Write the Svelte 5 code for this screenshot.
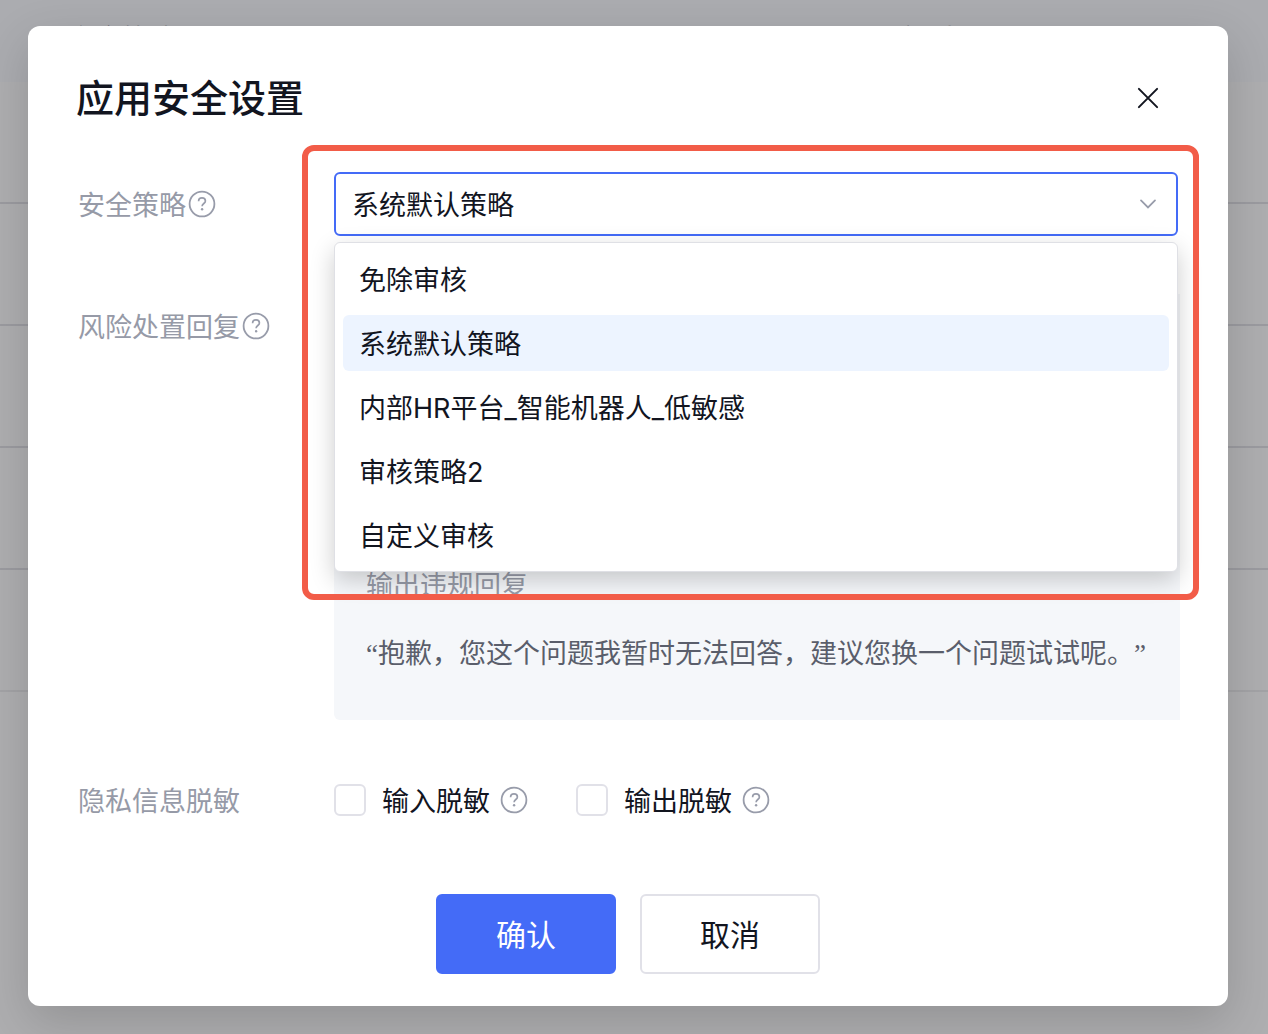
<script lang="ts">
	const options = [
		'免除审核',
		'系统默认策略',
		'内部HR平台_智能机器人_低敏感',
		'审核策略2',
		'自定义审核'
	];

	let policy = $state('系统默认策略');
	let open = $state(true);
	let maskInput = $state(false);
	let maskOutput = $state(false);

	function pick(option: string) {
		policy = option;
		open = false;
	}

	function toggle(e: MouseEvent) {
		e.preventDefault();
		open = !open;
	}
</script>

{#snippet help()}
	<button type="button" class="help" aria-label="帮助">
		<svg width="28" height="28" viewBox="0 0 28 28" fill="none" stroke="currentColor">
			<circle cx="14" cy="14" r="12.4" stroke-width="1.8" />
			<path
				d="M10.6 11.2c0-2 1.4-3.3 3.4-3.3s3.4 1.2 3.4 3c0 2.5-3.3 2.7-3.3 5.3"
				stroke-width="1.7"
			/>
			<circle cx="14.1" cy="19.2" r="1.2" fill="currentColor" stroke="none" />
		</svg>
	</button>
{/snippet}

<div class="page">
	<table class="backdrop" aria-hidden="true">
		<thead>
			<tr><th>安全策略</th><th>更新时间</th></tr>
		</thead>
		<tbody>
			{#each [1, 2, 3, 4, 5] as row (row)}
				<tr><td></td><td></td></tr>
			{/each}
		</tbody>
	</table>

	<div class="overlay">
		<div class="dialog" role="dialog" aria-modal="true" aria-labelledby="title">
			<header>
				<h1 id="title">应用安全设置</h1>
				<button type="button" class="close" aria-label="关闭">
					<svg width="24" height="24" viewBox="0 0 24 24" fill="none" stroke="currentColor">
						<path d="M2.9 2.9l18.2 18.2M21.1 2.9L2.9 21.1" stroke-width="2" stroke-linecap="round" />
					</svg>
				</button>
			</header>

			<div class="row policy">
				<div class="label"><label for="policy">安全策略</label>{@render help()}</div>
				<div class="select">
					<select id="policy" bind:value={policy} onmousedown={toggle}>
						{#each options as option}
							<option>{option}</option>
						{/each}
					</select>
					<svg class="arrow" width="20" height="20" viewBox="0 0 20 20" fill="none" stroke="currentColor">
						<path d="M3 6.4l7 7 7-7" stroke-width="1.8" stroke-linecap="round" />
					</svg>
					{#if open}
						<div class="menu" role="listbox" aria-label="安全策略">
							{#each options as option}
								<button
									type="button"
									role="option"
									aria-selected={option === policy}
									class:active={option === policy}
									onclick={() => pick(option)}>{option}</button
								>
							{/each}
						</div>
					{/if}
					<div class="highlight"></div>
				</div>
			</div>

			<div class="row reply">
				<div class="label"><span>风险处置回复</span>{@render help()}</div>
				<div class="panel">
					<p class="caption">输出违规回复</p>
					<p class="quote">“抱歉，您这个问题我暂时无法回答，建议您换一个问题试试呢。”</p>
				</div>
			</div>

			<div class="row privacy">
				<div class="label"><span>隐私信息脱敏</span></div>
				<div class="checks">
					<div class="check">
						<input type="checkbox" id="mask-input" bind:checked={maskInput} />
						<label for="mask-input">输入脱敏</label>
						{@render help()}
					</div>
					<div class="check">
						<input type="checkbox" id="mask-output" bind:checked={maskOutput} />
						<label for="mask-output">输出脱敏</label>
						{@render help()}
					</div>
				</div>
			</div>

			<footer>
				<button type="button" class="primary">确认</button>
				<button type="button">取消</button>
			</footer>
		</div>
	</div>
</div>

<style>
	:global(body) {
		margin: 0;
		background: #aeaeb0;
	}

	.page,
	.page button,
	.page select {
		font-family: Inter, 'Noto Sans CJK SC', sans-serif;
		font-size: 27px;
		color: #12151f;
	}

	.page {
		position: relative;
		min-height: 100vh;
		overflow: hidden;
	}

	.page button {
		padding: 0;
		border: 0;
		background: none;
		cursor: pointer;
	}

	svg {
		display: block;
	}

	/* table behind the dialog */
	.backdrop {
		position: absolute;
		top: 0;
		left: 0;
		width: 100%;
		table-layout: fixed;
		border-collapse: collapse;
	}

	.backdrop th {
		height: 82px;
		box-sizing: border-box;
		padding: 0 0 8px 68px;
		background: #abacb0;
		color: #55575e;
		font-weight: 400;
		text-align: left;
	}

	.backdrop th:last-child {
		padding-left: 240px;
	}

	.backdrop td {
		height: 120px;
		padding: 0;
		border-bottom: 2px solid #9b9ba0;
	}

	.backdrop tr:last-child td {
		border-color: #a3a3a6;
	}

	.overlay {
		position: relative;
		padding: 26px 40px 28px 28px;
	}

	.dialog {
		padding: 48px 48px 32px;
		border-radius: 12px;
		background: #fff;
		box-shadow: 0 16px 48px rgba(0, 0, 0, 0.16);
	}

	header {
		display: flex;
		justify-content: space-between;
		align-items: center;
		height: 48px;
		padding-right: 20px;
	}

	h1 {
		margin: 0;
		font-size: 38px;
		font-weight: 500;
		line-height: 48px;
	}

	.row {
		display: grid;
		grid-template-columns: 258px 1fr;
	}

	.policy {
		margin-top: 50px;
	}

	.reply {
		margin-top: 58px;
	}

	.privacy {
		margin-top: 48px;
	}

	.label {
		display: flex;
		align-items: center;
		gap: 2px;
		height: 64px;
		padding-left: 2px;
		color: #969aa7;
	}

	.label label,
	.label span,
	.check label {
		padding-bottom: 2px;
	}

	.page .help {
		color: #989caa;
	}

	.select {
		position: relative;
		margin-right: 2px;
	}

	.page select {
		appearance: none;
		display: block;
		width: 100%;
		height: 64px;
		padding: 2px 48px 0 16px;
		border: 2px solid #446bf7;
		border-radius: 6px;
		outline: none;
		background: #fff;
	}

	.arrow {
		position: absolute;
		top: 22px;
		right: 20px;
		color: #989caa;
		pointer-events: none;
	}

	.menu {
		position: absolute;
		z-index: 2;
		top: 70px;
		left: 0;
		right: 0;
		display: flex;
		flex-direction: column;
		gap: 8px;
		padding: 8px;
		border: 1px solid #dfe0e5;
		border-radius: 6px;
		background: #fff;
		box-shadow: 0 8px 24px rgba(0, 0, 0, 0.2);
	}

	.page .menu button {
		height: 56px;
		padding: 0 16px 2px;
		border-radius: 6px;
		text-align: left;
	}

	.page .menu .active {
		background: #edf4ff;
	}

	/* red frame round the open select */
	.highlight {
		position: absolute;
		z-index: 3;
		top: -27px;
		left: -32px;
		right: -21px;
		height: 443px;
		border: 6px solid #f25c48;
		border-radius: 12px;
		pointer-events: none;
	}

	.panel {
		display: flex;
		flex-direction: column;
		justify-content: flex-end;
		gap: 28px;
		min-height: 380px;
		padding: 0 0 46px 32px;
		border-radius: 6px 0 0 6px;
		background: #f5f7fa;
		color: #5a5e6b;
		line-height: 40px;
	}

	.panel p {
		margin: 0;
	}

	.panel .caption {
		color: #969aa7;
	}

	/* round quote marks, full-width stops */
	.panel .quote {
		font-family: 'Liberation Serif', 'Noto Sans CJK SC', sans-serif;
		text-spacing-trim: space-all;
		white-space: nowrap;
	}

	.checks {
		display: flex;
		align-items: center;
		gap: 48px;
	}

	.check {
		display: flex;
		align-items: center;
	}

	.check input {
		appearance: none;
		width: 32px;
		height: 32px;
		margin: 0 16px 0 0;
		border: 2px solid #e1e1e8;
		border-radius: 6px;
		background: #fff;
	}

	.check input:checked {
		border-color: #446bf7;
		background: #446bf7;
	}

	.check label {
		margin-right: 10px;
	}

	footer {
		display: flex;
		justify-content: center;
		gap: 24px;
		margin-top: 62px;
	}

	.page footer button {
		width: 180px;
		height: 80px;
		padding-bottom: 2px;
		border: 2px solid #e1e1e8;
		border-radius: 6px;
		font-size: 30px;
	}

	.page footer .primary {
		border-color: #446bf7;
		background: #446bf7;
		color: #fff;
	}
</style>
